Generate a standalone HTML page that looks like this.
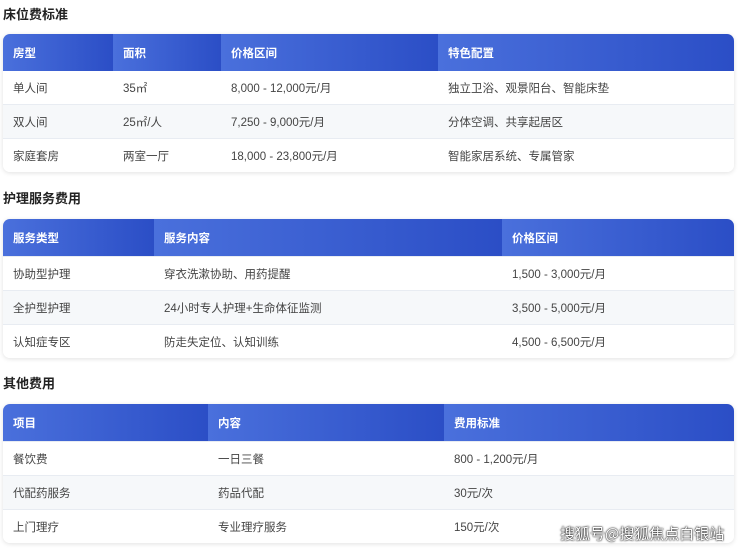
<!DOCTYPE html><html><head><meta charset="utf-8"><style>
body{margin:0;background:#fff;font-family:"Liberation Sans","Noto Sans CJK SC",sans-serif;width:740px;height:551px;overflow:hidden;position:relative}
h3{position:absolute;left:3px;margin:0;font-size:13px;font-weight:bold;color:#222}
.t{position:absolute;left:3px;width:731px;border-radius:7px;overflow:hidden;box-shadow:0 1px 5px rgba(0,0,0,.12);}
table{border-collapse:collapse;width:100%;font-size:11.5px;color:#444}
th{height:37px;text-align:left;padding:0 0 0 10px;color:#fff;font-weight:bold;background:linear-gradient(90deg,#4a70dc,#2b4ec6)}
td{height:33px;padding:0 0 0 10px;border-top:1px solid #e8ecf2}
tr:first-child td{border-top:none}
.wm{position:absolute;left:560px;top:523px;font-size:15px;color:#fff;text-shadow:0 0 2px #000,0 0 1px #000;font-family:"Noto Sans CJK SC",sans-serif}
</style></head><body>
<h3 style="top:4px">床位费标准</h3>
<div class="t" style="top:34px"><table>
<tr><th style="width:100px">房型</th><th style="width:98px">面积</th><th style="width:207px">价格区间</th><th>特色配置</th></tr>
<tbody>
<tr><td style="background:#fff">单人间</td><td style="background:#fff">35㎡</td><td style="background:#fff">8,000 - 12,000元/月</td><td style="background:#fff">独立卫浴、观景阳台、智能床垫</td></tr>
<tr><td style="background:#f6f8fa">双人间</td><td style="background:#f6f8fa">25㎡/人</td><td style="background:#f6f8fa">7,250 - 9,000元/月</td><td style="background:#f6f8fa">分体空调、共享起居区</td></tr>
<tr><td style="background:#fff">家庭套房</td><td style="background:#fff">两室一厅</td><td style="background:#fff">18,000 - 23,800元/月</td><td style="background:#fff">智能家居系统、专属管家</td></tr>
</tbody></table></div>
<h3 style="top:188px">护理服务费用</h3>
<div class="t" style="top:219px"><table>
<tr><th style="width:141px">服务类型</th><th style="width:338px">服务内容</th><th>价格区间</th></tr>
<tr><td style="background:#fff">协助型护理</td><td style="background:#fff">穿衣洗漱协助、用药提醒</td><td style="background:#fff">1,500 - 3,000元/月</td></tr>
<tr><td style="background:#f6f8fa">全护型护理</td><td style="background:#f6f8fa">24小时专人护理+生命体征监测</td><td style="background:#f6f8fa">3,500 - 5,000元/月</td></tr>
<tr><td style="background:#fff">认知症专区</td><td style="background:#fff">防走失定位、认知训练</td><td style="background:#fff">4,500 - 6,500元/月</td></tr>
</table></div>
<h3 style="top:373px">其他费用</h3>
<div class="t" style="top:404px"><table>
<tr><th style="width:195px">项目</th><th style="width:226px">内容</th><th>费用标准</th></tr>
<tr><td style="background:#fff">餐饮费</td><td style="background:#fff">一日三餐</td><td style="background:#fff">800 - 1,200元/月</td></tr>
<tr><td style="background:#f6f8fa">代配药服务</td><td style="background:#f6f8fa">药品代配</td><td style="background:#f6f8fa">30元/次</td></tr>
<tr><td style="background:#fff">上门理疗</td><td style="background:#fff">专业理疗服务</td><td style="background:#fff">150元/次</td></tr>
</table></div>
<div class="wm">搜狐号@搜狐焦点白银站</div>
</body></html>
